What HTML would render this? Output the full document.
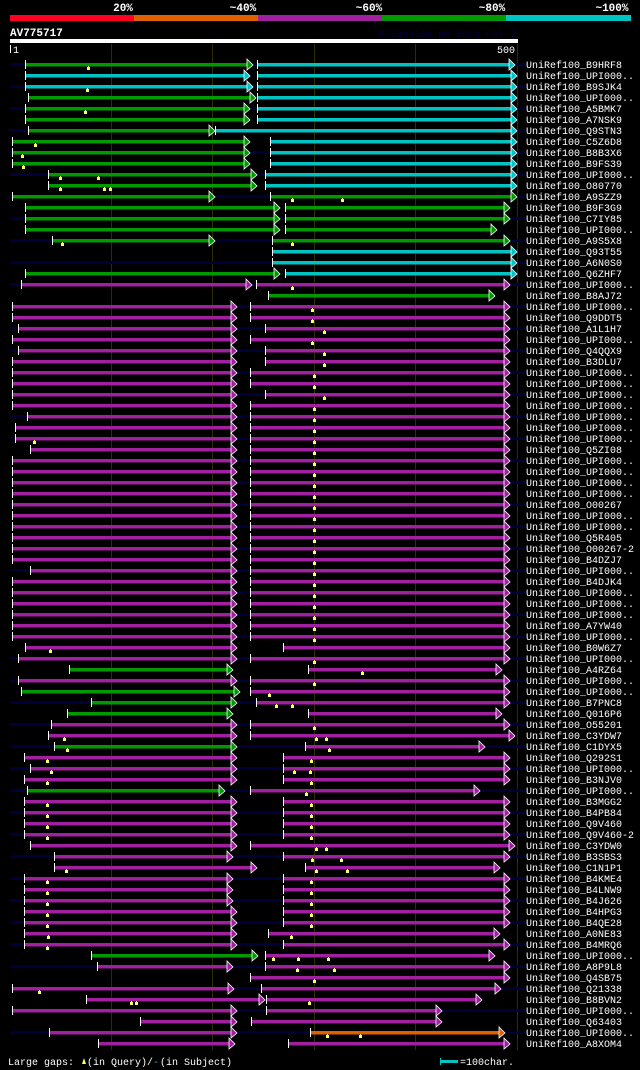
<!DOCTYPE html>
<html><head><meta charset="utf-8">
<style>
html,body{margin:0;padding:0;background:#000;}
body{width:640px;height:1070px;overflow:hidden;position:relative;font-family:"Liberation Mono","DejaVu Sans Mono",monospace;}
svg{position:absolute;left:0;top:0;}
</style></head><body>
<svg id="s" width="640" height="1070" xmlns="http://www.w3.org/2000/svg" font-family="Liberation Mono, DejaVu Sans Mono, monospace"></svg>
<script>
var G='#009a00',C='#00c4c4',P='#a020a0',O='#e06000';
var R=[
['B9HRF8',[[G,25,248],[C,257,510]],[88]],
['UPI000..',[[C,25,245],[C,257,512]],[]],
['B9SJK4',[[C,25,248],[C,257,512]],[87]],
['UPI000..',[[G,28,251],[C,257,512]],[]],
['A5BMK7',[[G,25,245],[C,257,512]],[85]],
['A7NSK9',[[G,25,245],[C,257,512]],[]],
['Q9STN3',[[G,28,210],[C,215,512]],[]],
['C5Z6D8',[[G,12,245],[C,270,512]],[35]],
['B8B3X6',[[G,12,245],[C,270,512]],[22]],
['B9FS39',[[G,12,245],[C,270,512]],[23]],
['UPI000..',[[G,48,252],[C,265,512]],[60,98]],
['O80770',[[G,48,252],[C,265,512]],[60,104,110]],
['A9SZZ9',[[G,12,210],[G,270,512]],[292,342]],
['B9F3G9',[[G,25,275],[G,285,505]],[]],
['C7IY85',[[G,25,275],[G,285,505]],[]],
['UPI000..',[[G,25,275],[G,285,492]],[]],
['A9S5X8',[[G,52,210],[G,272,505]],[62,292]],
['Q93T55',[[C,272,512]],[]],
['A6N0S0',[[C,272,512]],[]],
['Q6ZHF7',[[G,25,275],[C,285,512]],[]],
['UPI000..',[[P,21,247],[P,256,505]],[292]],
['B8AJ72',[[G,268,490]],[]],
['UPI000..',[[P,12,232],[P,250,505]],[312]],
['Q9DDT5',[[P,12,232],[P,250,505]],[312]],
['A1L1H7',[[P,18,232],[P,265,505]],[324]],
['UPI000..',[[P,12,232],[P,250,505]],[312]],
['Q4QQX9',[[P,18,232],[P,265,505]],[324]],
['B3DLU7',[[P,12,232],[P,265,505]],[324]],
['UPI000..',[[P,12,232],[P,250,505]],[314]],
['UPI000..',[[P,12,232],[P,250,505]],[314]],
['UPI000..',[[P,12,232],[P,265,505]],[324]],
['UPI000..',[[P,12,232],[P,250,505]],[314]],
['UPI000..',[[P,27,232],[P,250,505]],[314]],
['UPI000..',[[P,15,232],[P,250,505]],[314]],
['UPI000..',[[P,15,232],[P,250,505]],[34,314]],
['Q5ZI08',[[P,30,232],[P,250,505]],[314]],
['UPI000..',[[P,12,232],[P,250,505]],[314]],
['UPI000..',[[P,12,232],[P,250,505]],[314]],
['UPI000..',[[P,12,232],[P,250,505]],[314]],
['UPI000..',[[P,12,232],[P,250,505]],[314]],
['O00267',[[P,12,232],[P,250,505]],[314]],
['UPI000..',[[P,12,232],[P,250,505]],[314]],
['UPI000..',[[P,12,232],[P,250,505]],[314]],
['Q5R405',[[P,12,232],[P,250,505]],[314]],
['O00267-2',[[P,12,232],[P,250,505]],[314]],
['B4DZJ7',[[P,12,232],[P,250,505]],[314]],
['UPI000..',[[P,30,232],[P,250,505]],[314]],
['B4DJK4',[[P,12,232],[P,250,505]],[314]],
['UPI000..',[[P,12,232],[P,250,505]],[314]],
['UPI000..',[[P,12,232],[P,250,505]],[314]],
['UPI000..',[[P,12,232],[P,250,505]],[314]],
['A7YW40',[[P,12,232],[P,250,505]],[314]],
['UPI000..',[[P,12,232],[P,250,505]],[314]],
['B0W6Z7',[[P,25,232],[P,283,505]],[50]],
['UPI000..',[[P,18,232],[P,250,505]],[314]],
['A4RZ64',[[G,69,228],[P,308,497]],[362]],
['UPI000..',[[P,18,232],[P,250,505]],[314]],
['UPI000..',[[G,21,235],[P,250,505]],[269]],
['B7PNC8',[[G,91,232],[P,256,505]],[276,292]],
['Q016P6',[[G,67,228],[P,308,497]],[]],
['O55201',[[P,51,232],[P,250,505]],[314]],
['C3YDW7',[[P,48,232],[P,250,510]],[64,316,326]],
['C1DYX5',[[G,54,232],[P,305,480]],[67,329]],
['Q292S1',[[P,24,232],[P,283,505]],[47,311]],
['UPI000..',[[P,30,232],[P,283,505]],[51,294,310]],
['B3NJV0',[[P,24,232],[P,283,505]],[47,311]],
['UPI000..',[[G,27,220],[P,250,475]],[306]],
['B3MGG2',[[P,24,232],[P,283,505]],[47,311]],
['B4PB84',[[P,24,232],[P,283,505]],[47,311]],
['Q9V460',[[P,24,232],[P,283,505]],[47,311]],
['Q9V460-2',[[P,24,232],[P,283,505]],[47,311]],
['C3YDW0',[[P,30,232],[P,250,510]],[316,326]],
['B3SBS3',[[P,54,228],[P,283,505]],[312,341]],
['C1N1P1',[[P,54,252],[P,305,495]],[66,316,347]],
['B4KME4',[[P,24,228],[P,283,505]],[47,311]],
['B4LNW9',[[P,24,228],[P,283,505]],[47,311]],
['B4J626',[[P,24,228],[P,283,505]],[47,311]],
['B4HPG3',[[P,24,232],[P,283,505]],[47,311]],
['B4QE28',[[P,24,232],[P,283,505]],[47,311]],
['A0NE83',[[P,24,232],[P,268,495]],[48,291]],
['B4MRQ6',[[P,24,232],[P,283,505]],[47]],
['UPI000..',[[G,91,253],[P,265,490]],[273,298,328]],
['A8P9L8',[[P,97,228],[P,265,505]],[297,334]],
['Q4SB75',[[P,250,505]],[314]],
['Q21338',[[P,12,229],[P,261,496]],[39]],
['B8BVN2',[[P,86,260],[P,266,477]],[131,136,309]],
['UPI000..',[[P,12,232],[P,266,437]],[]],
['Q63403',[[P,140,232],[P,251,437]],[]],
['UPI000..',[[P,49,232],[O,310,500]],[327,360]],
['A8XOM4',[[P,98,230],[P,288,505]],[]]
];
var h=[];
var bars=[['#ff0020',10,134],['#e06000',134,258],['#a020a0',258,382],['#009a00',382,506],['#00c4c4',506,631]];
bars.forEach(function(b){h.push('<rect x="'+b[1]+'" y="15" width="'+(b[2]-b[1])+'" height="6" fill="'+b[0]+'"/>');});
[['20%',123],['~40%',243],['~60%',369],['~80%',492],['~100%',612]].forEach(function(l){
h.push('<text x="'+l[1]+'" y="11" fill="#fff" font-size="11" font-weight="bold" text-anchor="middle">'+l[0]+'</text>');});
h.push('<text x="10" y="36" fill="#fff" font-size="11" font-weight="bold">AV775717</text>');
h.push('<text x="516" y="37" fill="#000040" font-size="10" text-anchor="end">AlignView.pm Beta rel.7</text>');
h.push('<rect x="10" y="39" width="508" height="4" fill="#fff"/>');
h.push('<rect x="10" y="45" width="1" height="8" fill="#fff"/><text x="13" y="53" fill="#fff" font-size="10">1</text>');
h.push('<rect x="517" y="45" width="1" height="8" fill="#fff"/><text x="515" y="53" fill="#fff" font-size="10" text-anchor="end">500</text>');
[111,212,314,415,517].forEach(function(x){h.push('<rect x="'+x+'" y="44" width="1" height="1006" fill="#2e2e00"/>');});
R.forEach(function(r,i){
 var y=64+11*i;
 if(i%2==0) h.push('<rect x="10" y="'+(y-1)+'" width="515" height="3" fill="#000038"/>');
 r[1].forEach(function(s){
  var c=s[0],a=s[1],b=s[2];
  h.push('<rect x="'+a+'" y="'+(y-1)+'" width="'+(b-a)+'" height="3.5" fill="'+c+'"/>');
  h.push('<rect x="'+a+'" y="'+(y-4)+'" width="1" height="9" fill="#fff"/>');
  h.push('<polygon points="'+(b-1)+','+(y-5)+' '+(b+5)+','+(y+1)+' '+(b-1)+','+(y+6)+'" fill="'+c+'" stroke="#fff" stroke-width="0.8"/>');
 });
 r[2].forEach(function(x){h.push('<rect x="'+(x-1)+'" y="'+(y+3)+'" width="3" height="3" fill="#ffff66"/><rect x="'+x+'" y="'+(y+2)+'" width="1" height="1" fill="#ffff66"/>');});
 h.push('<text x="526" y="'+(y+4)+'" fill="#fff" font-size="10">UniRef100_'+r[0]+'</text>');
});
h.push('<text x="8" y="1065" fill="#fff" font-size="10">Large gaps: </text>');
h.push('<polygon points="82,1064 84,1058 86,1064" fill="#ffff66"/>');
h.push('<text x="87" y="1065" fill="#fff" font-size="10">(in Query)/</text><text x="153" y="1065" fill="#00c4c4" font-size="10">-</text><text x="160" y="1065" fill="#fff" font-size="10"> (in Subject)</text>');
h.push('<rect x="440" y="1058" width="1" height="7" fill="#00c4c4"/><rect x="440" y="1060" width="18" height="3" fill="#00c4c4"/>');
h.push('<text x="460" y="1065" fill="#fff" font-size="10">=100char.</text>');
document.getElementById('s').innerHTML=h.join('');
</script>
</body></html>
